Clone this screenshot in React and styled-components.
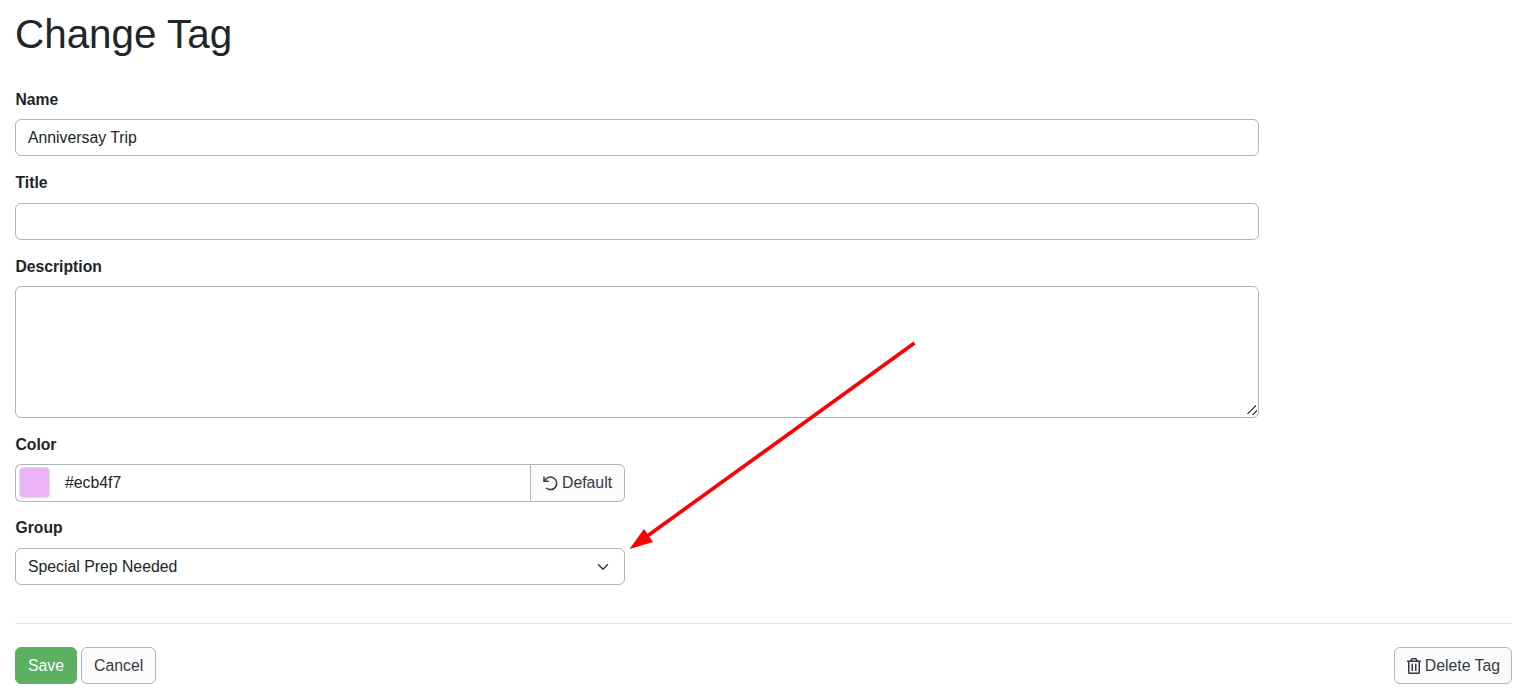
import React from 'react'
import styled, { createGlobalStyle } from 'styled-components'
import { FaRegTrashAlt } from 'react-icons/fa'

const GlobalStyle = createGlobalStyle`
  html, body { margin: 0; padding: 0; background: #fff; }
  body {
    font-family: "Liberation Sans", Arial, sans-serif;
    font-size: 15.8px;
    line-height: 24px;
    color: #212529;
  }
  * { box-sizing: border-box; }
`

const Chevron = () => (
  <ChevronSvg viewBox="0 0 16 16">
    <path fill="none" stroke="#343a40" strokeLinecap="round" strokeLinejoin="round" strokeWidth="2" d="m2 5 6 6 6-6" />
  </ChevronSvg>
)

const UndoIcon = () => (
  <UndoSvg viewBox="0 0 16 16">
    <path fill="none" stroke="currentColor" strokeWidth="1.5" d="M2 1.5v4.7h4.7" />
    <path fill="none" stroke="currentColor" strokeWidth="1.5" d="M2.6 5.9A6.3 6.3 0 1 1 4.2 13" />
  </UndoSvg>
)

const Arrow = () => (
  <ArrowSvg width="1526" height="700" viewBox="0 0 1526 700">
    <line x1="914.5" y1="343" x2="648" y2="535.5" stroke="#ff0000" strokeWidth="3.6" />
    <polygon points="629.5,549 644,529 653,542" fill="#ff0000" />
  </ArrowSvg>
)

const App = () => {
  return (
    <Page>
      <GlobalStyle />
      <Heading>Change Tag</Heading>
      <Fields>
        <Field>
          <Label>Name</Label>
          <TextInput defaultValue="Anniversay Trip" />
        </Field>
        <Field>
          <Label>Title</Label>
          <TextInput />
        </Field>
        <Field>
          <Label>Description</Label>
          <TextArea />
        </Field>
        <Field narrow>
          <Label>Color</Label>
          <InputGroup>
            <ColorCell>
              <Swatch />
              <ColorValue defaultValue="#ecb4f7" />
            </ColorCell>
            <DefaultButton type="button">
              <UndoIcon />
              Default
            </DefaultButton>
          </InputGroup>
        </Field>
        <Field narrow>
          <Label>Group</Label>
          <SelectBox>
            <span>Special Prep Needed</span>
            <Chevron />
          </SelectBox>
        </Field>
      </Fields>
      <Divider />
      <Footer>
        <Actions>
          <Button primary type="button">Save</Button>
          <Button type="button">Cancel</Button>
        </Actions>
        <DeleteButton type="button">
          <TrashIcon size={16} />
          Delete Tag
        </DeleteButton>
      </Footer>
      <Arrow />
    </Page>
  )
}

export default App

const Page = styled.div`
  position: relative;
  height: 700px;
  padding: 0 14px 0 15px;
  overflow: hidden;
`

const Heading = styled.h1`
  margin: 0;
  padding-top: 10px;
  height: 87.7px;
  font-size: 40.4px;
  line-height: 48px;
  font-weight: 400;
  color: #212529;
`

const Fields = styled.div`
  width: 1244px;
  display: flex;
  flex-direction: column;
  gap: 14.8px;
`

const Field = styled.div`
  width: ${({ narrow }) => (narrow ? '610px' : '100%')};
`

const Label = styled.label`
  display: block;
  height: 24px;
  margin-bottom: 7.5px;
  padding-left: 0.5px;
  font-size: 15.7px;
  line-height: 24px;
  font-weight: 700;
  color: #212529;
`

const TextInput = styled.input`
  display: block;
  width: 100%;
  height: 37.2px;
  padding: 6px 12px;
  font: 400 15.8px/24px "Liberation Sans", Arial, sans-serif;
  color: #212529;
  background: #fff;
  border: 1px solid #adb5bd;
  border-radius: 6px;
  outline: none;
`

const TextArea = styled.textarea`
  display: block;
  width: 100%;
  height: 131.8px;
  padding: 6px 12px;
  font: 400 15.8px/24px "Liberation Sans", Arial, sans-serif;
  background: #fff;
  border: 1px solid #adb5bd;
  border-radius: 6px;
  outline: none;

  &::-webkit-resizer {
    background:
      linear-gradient(135deg, transparent 46%, #555 46% 58%, transparent 58%) no-repeat 4px 3px / 9px 9px,
      linear-gradient(135deg, transparent 44%, #555 44% 60%, transparent 60%) no-repeat 9px 8px / 5px 5px;
  }
`

const InputGroup = styled.div`
  display: flex;
  height: 37.3px;
`

const ColorCell = styled.div`
  flex: 1;
  display: flex;
  align-items: center;
  gap: 15px;
  padding: 0 3px;
  border: 1px solid #adb5bd;
  border-right: 0;
  border-radius: 6px 0 0 6px;
`

const Swatch = styled.div`
  width: 31px;
  height: 31px;
  background: #ecb4f7;
  border: 1px solid #dee2e6;
  border-radius: 4px;
`

const ColorValue = styled.input`
  flex: 1;
  min-width: 0;
  border: 0;
  outline: none;
  padding: 0;
  font: 400 15.8px/24px "Liberation Sans", Arial, sans-serif;
  color: #212529;
  background: transparent;
`

const DefaultButton = styled.button`
  display: inline-flex;
  align-items: center;
  gap: 4px;
  width: 95px;
  padding: 0 0 0 11px;
  font: 400 15.8px/24px "Liberation Sans", Arial, sans-serif;
  color: #343a40;
  background: #fbfbfc;
  border: 1px solid #adb5bd;
  border-radius: 0 6px 6px 0;
`

const UndoSvg = styled.svg`
  width: 16px;
  height: 16px;
  flex: none;
`

const SelectBox = styled.div`
  display: flex;
  align-items: center;
  justify-content: space-between;
  height: 37.2px;
  padding: 1px 13px 0 12px;
  font-size: 15.8px;
  color: #212529;
  background: #fff;
  border: 1px solid #adb5bd;
  border-radius: 6px;
`

const ChevronSvg = styled.svg`
  width: 16px;
  height: 12px;
  flex: none;
`

const Divider = styled.hr`
  margin: 38px 0 23px;
  height: 1px;
  border: 0;
  background: #dee2e6;
`

const Footer = styled.div`
  display: flex;
  justify-content: space-between;
`

const Actions = styled.div`
  display: flex;
  gap: 4px;
`

const Button = styled.button`
  display: inline-flex;
  align-items: center;
  gap: 1px;
  height: 37px;
  padding: 0 12px;
  font: 400 15.8px/24px "Liberation Sans", Arial, sans-serif;
  color: ${({ primary }) => (primary ? '#fff' : '#343a40')};
  background: ${({ primary }) => (primary ? '#5cb05f' : '#fbfbfc')};
  border: 1px solid ${({ primary }) => (primary ? '#5cb05f' : '#adb5bd')};
  border-radius: 6px;
`

const DeleteButton = styled(Button)`
  padding-right: 11px;
`

const TrashIcon = styled(FaRegTrashAlt)`
  margin: 0 2px 0 -1px;
`

const ArrowSvg = styled.svg`
  position: absolute;
  top: 0;
  left: 0;
  pointer-events: none;
`
